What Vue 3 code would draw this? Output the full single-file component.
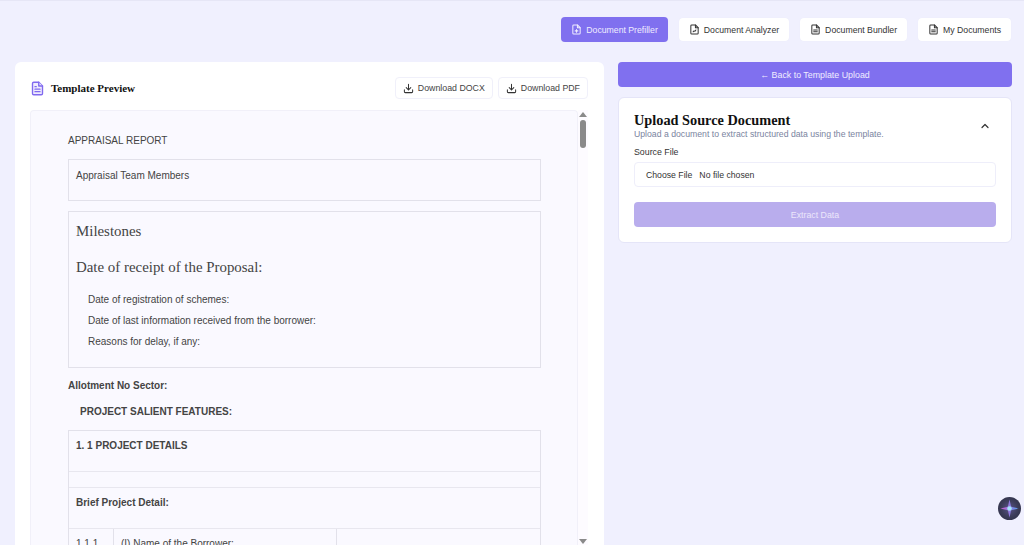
<template>
  <div class="page">
    <nav class="top-nav">
      <button v-for="tab in tabs" :key="tab.label" class="nav-btn" :class="{ active: tab.active }">
        <svg class="nav-icon" viewBox="0 0 24 24" fill="none" stroke="currentColor" stroke-width="2.2" stroke-linecap="round" stroke-linejoin="round">
          <path d="M14 2H6a2 2 0 0 0-2 2v16a2 2 0 0 0 2 2h12a2 2 0 0 0 2-2V8z" />
          <path d="M14 2v6h6" />
          <path :d="tab.mark" />
        </svg>
        {{ tab.label }}
      </button>
    </nav>

    <div class="columns">
      <section class="preview-card">
        <header class="preview-head">
          <div class="preview-title">
            <svg class="title-icon" viewBox="0 0 24 24" fill="#efecfd" stroke="#8069ef" stroke-width="2.2" stroke-linecap="round" stroke-linejoin="round">
              <path d="M14 2H6a2 2 0 0 0-2 2v16a2 2 0 0 0 2 2h12a2 2 0 0 0 2-2V8z" />
              <path d="M14 2v6h6" />
              <path d="M8 13h8M8 17h8M8 9h2" />
            </svg>
            <h2>Template Preview</h2>
          </div>
          <div class="downloads">
            <button v-for="d in downloads" :key="d" class="dl-btn">
              <svg class="dl-icon" viewBox="0 0 24 24" fill="none" stroke="currentColor" stroke-width="2.2" stroke-linecap="round" stroke-linejoin="round">
                <path d="M12 3v12M7 10l5 5 5-5" />
                <path d="M3 15v4a2 2 0 0 0 2 2h14a2 2 0 0 0 2-2v-4" />
              </svg>
              {{ d }}
            </button>
          </div>
        </header>

        <div class="preview-wrap">
          <div class="doc">
            <p class="doc-title">APPRAISAL REPORT</p>
            <div class="box team">Appraisal Team Members</div>
            <div class="box milestones">
              <h3>Milestones</h3>
              <h3 class="receipt">Date of receipt of the Proposal:</h3>
              <p>Date of registration of schemes:</p>
              <p>Date of last information received from the borrower:</p>
              <p>Reasons for delay, if any:</p>
            </div>
            <p class="allot">Allotment No Sector:</p>
            <p class="salient">PROJECT SALIENT FEATURES:</p>
            <div class="details">
              <div class="row head-row">1. 1 PROJECT DETAILS</div>
              <div class="row spacer"></div>
              <div class="row head-row">Brief Project Detail:</div>
              <div class="row cells">
                <div class="num">1.1.1</div>
                <div class="name">(I) Name of the Borrower:</div>
                <div class="val"></div>
              </div>
            </div>
          </div>
          <div class="scroller">
            <span class="arrow up"></span>
            <span class="thumb"></span>
            <span class="arrow down"></span>
          </div>
        </div>
      </section>

      <aside class="side">
        <button class="back-btn">← Back to Template Upload</button>
        <section class="upload-card">
          <div class="upload-head">
            <div>
              <h2>Upload Source Document</h2>
              <p>Upload a document to extract structured data using the template.</p>
            </div>
            <svg class="chevron" viewBox="0 0 24 24" fill="none" stroke="#333" stroke-width="2.4" stroke-linecap="round" stroke-linejoin="round">
              <path d="M6 15l6-6 6 6" />
            </svg>
          </div>
          <label class="field-label">Source File</label>
          <div class="file-input"><span class="choose">Choose File</span><span>No file chosen</span></div>
          <button class="extract-btn">Extract Data</button>
        </section>
      </aside>
    </div>

    <div class="assistant">
      <svg viewBox="0 0 24 24" width="23" height="23">
        <defs>
          <radialGradient id="orb" cx="50%" cy="50%" r="50%">
            <stop offset="0%" stop-color="#5a5388" />
            <stop offset="70%" stop-color="#3c3d5a" />
            <stop offset="100%" stop-color="#35364f" />
          </radialGradient>
          <linearGradient id="star" x1="0" y1="0" x2="1" y2="0">
            <stop offset="0%" stop-color="#c75fc9" />
            <stop offset="55%" stop-color="#8a7be0" />
            <stop offset="100%" stop-color="#5aa0e8" />
          </linearGradient>
        </defs>
        <circle cx="12" cy="12" r="12" fill="url(#orb)" />
        <path d="M12 2.5l1.7 7.8L21.5 12l-7.8 1.7L12 21.5l-1.7-7.8L2.5 12l7.8-1.7z" fill="url(#star)" />
        <circle cx="12" cy="12" r="2.4" fill="#a5e4fa" />
      </svg>
    </div>
  </div>
</template>

<script setup>
const tabs = [
  { label: "Document Prefiller", active: true, mark: "M12 12v6M9 15h6" },
  { label: "Document Analyzer", mark: "M9 17l2-2 2 1 2-3" },
  { label: "Document Bundler", mark: "M8 13h8M8 17h8" },
  { label: "My Documents", mark: "M8 13h8M8 17h8" },
];

const downloads = ["Download DOCX", "Download PDF"];
</script>

<style>
html,
body {
  margin: 0;
  overflow: hidden;
}
</style>

<style scoped>
.page {
  position: relative;
  height: 545px;
  box-sizing: border-box;
  overflow: hidden;
  background: #f0f0fe;
  border-top: 1px solid #e6e6f6;
  font-family: "Liberation Sans", Arial, sans-serif;
  color: #333;
}

button {
  font-family: inherit;
  cursor: pointer;
}

.top-nav {
  display: flex;
  justify-content: flex-end;
  align-items: center;
  gap: 11px;
  padding: 16px 13px 0 0;
  height: 25px;
}

.nav-btn {
  display: flex;
  align-items: center;
  gap: 4px;
  height: 23px;
  padding: 0 10px;
  font-size: 8.7px;
  color: #333;
  background: #fff;
  border: 0;
  border-radius: 4px;
  box-shadow: 0 0 1px #e6e6f6;
}

.nav-btn.active {
  background: #8070ef;
  color: #f0edff;
  height: 25px;
}

.nav-icon {
  width: 11px;
  height: 11px;
}

.columns {
  display: flex;
  gap: 14px;
  padding: 20px 12px 0 15px;
}

.preview-card {
  flex: 0 0 589px;
  height: 490px;
  box-sizing: border-box;
  padding: 0 16px 0 15px;
  background: #fff;
  border-radius: 6px;
}

.preview-head {
  display: flex;
  justify-content: space-between;
  align-items: center;
  height: 48px;
  padding-top: 4px;
  box-sizing: border-box;
}

.preview-title {
  display: flex;
  align-items: center;
  gap: 6px;
}

.title-icon {
  width: 15px;
  height: 15px;
}

.preview-title h2 {
  margin: 0;
  font-family: "Liberation Serif", "Times New Roman", serif;
  font-size: 11px;
  font-weight: 700;
  color: #111;
}

.downloads {
  display: flex;
  gap: 5px;
}

.dl-btn {
  display: flex;
  align-items: center;
  gap: 4px;
  height: 22px;
  padding: 0 7px;
  font-size: 8.8px;
  color: #444;
  background: #fff;
  border: 1px solid #f0f0fa;
  border-radius: 4px;
}

.dl-icon {
  width: 11px;
  height: 11px;
  color: #333;
}

.preview-wrap {
  display: flex;
  height: 435px;
}

.doc {
  flex: 0 0 548px;
  box-sizing: border-box;
  height: 100%;
  padding: 23px 36px 0 37px;
  background: #faf9ff;
  border: 1px solid #f1f0f9;
  border-bottom: 0;
  border-radius: 4px 4px 0 0;
  overflow: hidden;
  font-size: 10px;
  color: #444;
}

.doc p {
  margin: 0;
}

.doc .doc-title {
  line-height: 14px;
  margin-bottom: 11px;
}

.box {
  border: 1px solid #e2e1ea;
}

.team {
  height: 42px;
  box-sizing: border-box;
  padding: 10px 7px;
  line-height: 12px;
  margin-bottom: 10px;
}

.milestones {
  height: 157px;
  box-sizing: border-box;
  padding: 10px 7px 0;
}

.milestones h3 {
  margin: 0;
  font-family: "Liberation Serif", "Times New Roman", serif;
  font-size: 14.9px;
  font-weight: 400;
  line-height: 18px;
}

.milestones .receipt {
  margin: 18px 0 18px;
}

.milestones p {
  margin: 0 0 9px 12px;
  line-height: 12px;
}

.doc .allot {
  margin-top: 12px;
  font-weight: 700;
  line-height: 12px;
}

.doc .salient {
  margin: 14px 0 0 12px;
  font-weight: 700;
  line-height: 12px;
}

.details {
  margin-top: 12px;
  border: 1px solid #e2e1ea;
  border-bottom: 0;
}

.row {
  border-bottom: 1px solid #e8e7ef;
}

.head-row {
  height: 41px;
  box-sizing: border-box;
  padding: 9px 7px;
  line-height: 12px;
  font-weight: 700;
}

.spacer {
  height: 15px;
}

.cells {
  display: flex;
  height: 40px;
  border-bottom: 0;
}

.num {
  flex: 0 0 45px;
  padding: 9px 0 0 7px;
  box-sizing: border-box;
  border-right: 1px solid #e2e1ea;
}

.name {
  flex: 0 0 223px;
  padding: 9px 0 0 7px;
  box-sizing: border-box;
  border-right: 1px solid #e2e1ea;
}

.scroller {
  flex: 0 0 10px;
  display: flex;
  flex-direction: column;
  align-items: center;
  background: #fdfbff;
  padding-top: 2px;
  box-sizing: border-box;
}

.arrow {
  width: 0;
  height: 0;
  border-left: 4px solid transparent;
  border-right: 4px solid transparent;
}

.arrow.up {
  border-bottom: 5px solid #8a8a8a;
}

.arrow.down {
  margin-top: auto;
  margin-bottom: 1px;
  border-top: 5px solid #8a8a8a;
}

.thumb {
  width: 6px;
  height: 28px;
  margin-top: 3px;
  background: #8a8a8a;
  border-radius: 3px;
}

.side {
  flex: 1;
  display: flex;
  flex-direction: column;
  gap: 10px;
}

.back-btn {
  height: 25px;
  color: #f0edff;
  font-size: 8.85px;
  background: #8070ef;
  border: 0;
  border-radius: 4px;
}

.upload-card {
  height: 146px;
  box-sizing: border-box;
  padding: 15px 15px 0;
  background: #fff;
  border: 1px solid #e5e5f8;
  border-radius: 6px;
}

.upload-head {
  display: flex;
  justify-content: space-between;
  align-items: center;
}

.upload-head h2 {
  margin: 0;
  font-family: "Liberation Serif", "Times New Roman", serif;
  font-size: 14.3px;
  line-height: 15px;
  font-weight: 700;
  color: #111;
}

.upload-head p {
  margin: 0;
  font-size: 8.7px;
  line-height: 13px;
  color: #7a84a0;
}

.chevron {
  width: 12px;
  height: 12px;
  margin: 0 5px 2px 0;
}

.field-label {
  display: block;
  margin-top: 6px;
  font-size: 8.8px;
  line-height: 11px;
  color: #333;
}

.file-input {
  display: flex;
  align-items: center;
  gap: 7px;
  height: 25px;
  box-sizing: border-box;
  margin-top: 4px;
  padding-left: 11px;
  font-size: 8.7px;
  color: #333;
  border: 1px solid #eeeefa;
  border-radius: 4px;
}

.extract-btn {
  display: block;
  width: 100%;
  height: 25px;
  margin-top: 15px;
  color: #ece6fb;
  font-size: 8.8px;
  background: #b9aded;
  border: 0;
  border-radius: 4px;
}

.assistant {
  position: absolute;
  top: 496px;
  left: 998px;
  width: 23px;
  height: 23px;
  display: flex;
}
</style>
